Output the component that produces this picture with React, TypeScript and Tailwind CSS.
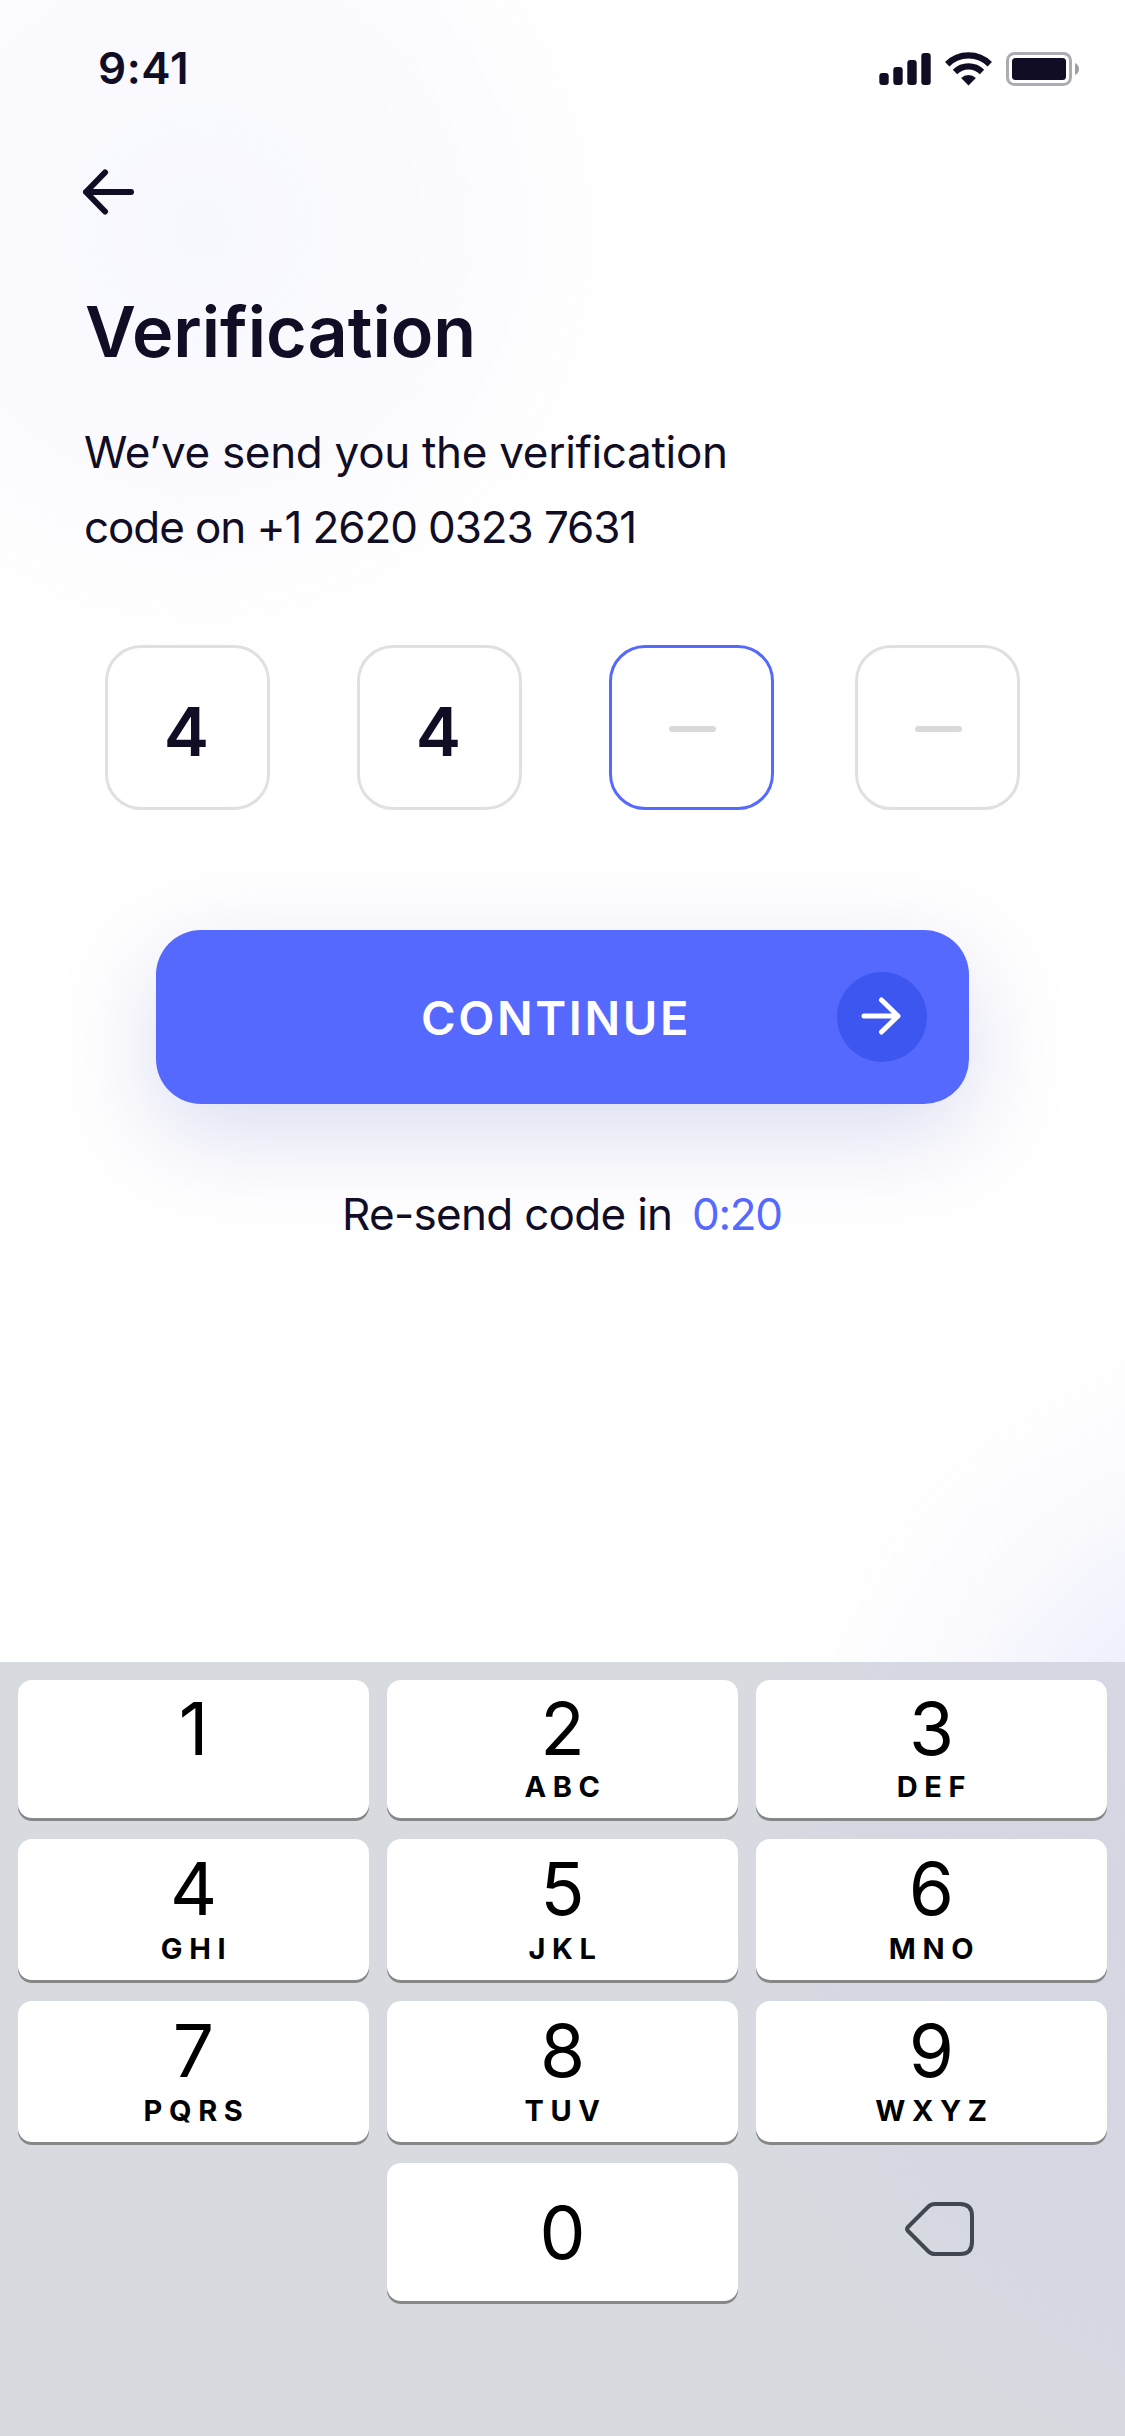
type KeyData = { digit: string; letters?: string };

const ROWS: KeyData[][] = [
  [{ digit: "1" }, { digit: "2", letters: "ABC" }, { digit: "3", letters: "DEF" }],
  [
    { digit: "4", letters: "GHI" },
    { digit: "5", letters: "JKL" },
    { digit: "6", letters: "MNO" },
  ],
  [
    { digit: "7", letters: "PQRS" },
    { digit: "8", letters: "TUV" },
    { digit: "9", letters: "WXYZ" },
  ],
];

const KEY = "flex flex-col items-center rounded-[14px] bg-white text-black shadow-[0_3px_0_#868789]";

function StatusBar() {
  return (
    <div className="flex h-[130px] items-start justify-between pr-[44px] pl-[98px]">
      <span className="mt-[46px] text-[44px] leading-[44px] font-semibold tracking-[0.600px]">9:41</span>
      <div className="mt-[52px] flex items-start">
        <svg width="52" height="34" viewBox="0 0 52 34" fill="#100D25">
          <rect x="0.300" y="21" width="9.400" height="12" rx="3" />
          <rect x="14.300" y="15" width="9.400" height="18" rx="3" />
          <rect x="28.300" y="8" width="9.400" height="25" rx="3" />
          <rect x="42.300" y="1" width="9.400" height="32" rx="3" />
        </svg>
        <svg className="ml-[14px]" width="47" height="34" viewBox="0 0 47 34">
          <g fill="none" stroke="#100D25" strokeWidth="6.200">
            <path d="M2.230 12.230A30.100 30.100 0 0 1 44.770 12.230" />
            <path d="M10 20A19.100 19.100 0 0 1 37 20" />
          </g>
          <path d="M16.100 26.100A10.500 10.500 0 0 1 30.900 26.100L23.500 33.500Z" fill="#100D25" />
        </svg>
        <svg className="ml-[14px]" width="75" height="34" viewBox="0 0 75 34">
          <rect x="1.500" y="1.500" width="63" height="31" rx="7" fill="none" stroke="#100D25" strokeOpacity=".35" strokeWidth="3" />
          <rect x="6" y="6" width="54" height="22" rx="3.500" fill="#100D25" />
          <path d="M69 11v12c2.400-1 4-3.300 4-6s-1.600-5-4-6Z" fill="#100D25" fillOpacity=".4" />
        </svg>
      </div>
    </div>
  );
}

function CodeBox({ value, active, className }: { value?: string; active?: boolean; className?: string }) {
  return (
    <div
      className={`flex size-[165px] items-center justify-center rounded-[36px] border-3 bg-white ${
        active ? "border-[#5669FF]" : "border-[#E4DFDF]"
      } ${className ?? ""}`}
    >
      {value ? (
        <span className="mt-[6px] mr-[2px] text-[68px] leading-none font-semibold">{value}</span>
      ) : (
        <span className="mt-[3px] ml-[1px] h-[6px] w-[47px] rounded-full bg-[#D9D9D9]" />
      )}
    </div>
  );
}

function Keypad() {
  return (
    <div className="h-[774px] bg-[radial-gradient(circle_at_1300px_240px,#D4D7E2_0px,#D5D8E1_440px,#D7DADF_580px,#D7DADF_100%)] px-[18px] pt-[18px]">
      <div className="grid grid-cols-3 grid-rows-[138px_141px_141px_138px] gap-x-[18px] gap-y-[21px]">
        {ROWS.map((row, r) =>
          row.map((k) => (
            <div key={k.digit} className={`${KEY} ${r === 0 ? "pt-[12px]" : "pt-[13px]"}`}>
              <span className="text-[73px] leading-[73px]">{k.digit}</span>
              {k.letters && (
                <span
                  className={`pl-[6px] text-[29px] leading-[29px] font-bold tracking-[6.600px] ${
                    r === 0 ? "mt-[7px]" : "mt-[9px]"
                  }`}
                >
                  {k.letters}
                </span>
              )}
            </div>
          )),
        )}
        <div className={`${KEY} col-start-2 pt-[33px]`}>
          <span className="text-[73px] leading-[73px]">0</span>
        </div>
        <div className="flex justify-center pt-[39px] pl-[16px]">
          <svg width="69" height="54" viewBox="0 0 69 54" fill="none" stroke="#42464F" strokeWidth="4" strokeLinejoin="round">
            <path d="M30 2H55Q67 2 67 14V40Q67 52 55 52H30Q26 52 23.500 49.500L3 29Q1 27 3 25L23.500 4.500Q26 2 30 2Z" />
          </svg>
        </div>
      </div>
    </div>
  );
}

export default function App() {
  return (
    <div className="flex h-[2436px] w-[1125px] flex-col overflow-hidden bg-white bg-[radial-gradient(circle_at_200px_230px,#F7F8FE_0,#FAFAFE_200px,#FFFFFF00_450px),radial-gradient(circle_at_1300px_1850px,#E6E7FA_0,#EFF0FC_260px,#FBFBFE_410px,#FFFFFF00_560px)] font-[Inter,sans-serif] text-[#100D25]">
      <StatusBar />
      <svg className="mt-[39px] ml-[82px]" width="53" height="46" viewBox="0 0 53 46" fill="none" stroke="#100D25" strokeWidth="6" strokeLinecap="round" strokeLinejoin="round">
        <path d="M49 23H4M23 3.500 4 23 23 42.500" />
      </svg>
      <h1 className="mt-[82px] ml-[85px] text-[70px] leading-[70px] font-semibold">Verification</h1>
      <p className="mt-[48px] ml-[84px] flex flex-col text-[44px] leading-[75px]">
        <span className="tracking-[-0.300px]">We’ve send you the verification</span>
        <span className="tracking-[-1.100px]">code on +1 2620 0323 7631</span>
      </p>
      <div className="mt-[80px] flex pl-[105px]">
        <CodeBox value="4" />
        <CodeBox value="4" className="ml-[87px]" />
        <CodeBox active className="ml-[87px]" />
        <CodeBox className="ml-[81px]" />
      </div>
      <button className="mt-[120px] ml-[156px] flex h-[174px] w-[813px] items-center justify-between rounded-[45px] bg-[#5669FF] pr-[42px] pl-[265px] text-white shadow-[0_30px_95px_rgba(111,116,201,0.25)]">
        <span className="text-[47px] leading-none font-semibold tracking-[2.600px]">CONTINUE</span>
        <span className="flex size-[90px] items-center justify-center rounded-full bg-[#3D56F0]">
          <svg className="-mt-[3px] -ml-[3px]" width="40" height="38" viewBox="0 0 40 38" fill="none" stroke="#FFFFFF" strokeWidth="5" strokeLinecap="round" strokeLinejoin="round">
            <path d="M3 19H37M20.500 3 37 19 20.500 35" />
          </svg>
        </span>
      </button>
      <div className="mt-[85px] ml-[342px] flex text-[44px] leading-[50px]">
        <span className="w-[350px] tracking-[-0.700px]">Re-send code in</span>
        <span className="tracking-[-1.300px] text-[#5669FF]">0:20</span>
      </div>
      <div className="mt-auto">
        <Keypad />
      </div>
    </div>
  );
}
